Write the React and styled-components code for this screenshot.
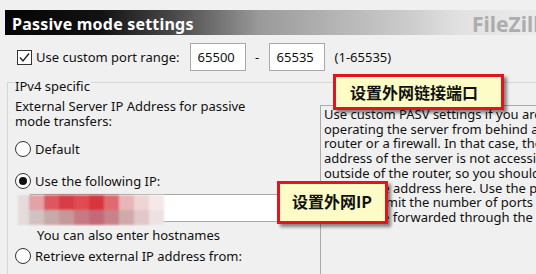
import React from 'react';
import styled, { createGlobalStyle } from 'styled-components';

const GlobalStyle = createGlobalStyle`
  html, body {
    margin: 0;
    padding: 0;
    background: #f0f0f0;
  }
  body {
    font-family: "Noto Sans", "Liberation Sans", sans-serif;
    font-size: 13px;
    color: #111;
  }
`;

const Page = styled.div`
  position: relative;
  width: 536px;
  height: 274px;
  overflow: hidden;
  background: #f0f0f0;
  padding-top: 10px;
  box-sizing: border-box;
`;

const Header = styled.div`
  margin-left: 5px;
  height: 25px;
  display: grid;
  grid-template-columns: 460px auto;
  align-items: center;
  padding-left: 7px;
  overflow: hidden;
  white-space: nowrap;
  background: linear-gradient(
    90deg,
    #050505 0%,
    #121212 18%,
    #4a4a4a 32%,
    #9a9a9a 48%,
    #b4b4b4 62%,
    #cccccc 76%,
    #e2e2e2 86%,
    #ebebeb 100%
  );
`;

const Title = styled.span`
  color: #fff;
  font-weight: 700;
  font-size: 16px;
  letter-spacing: 0.2px;
`;

const Brand = styled.span`
  color: #adadad;
  font-weight: 700;
  font-size: 21px;
`;

const PortRow = styled.div`
  display: flex;
  align-items: center;
  height: 28px;
  margin-top: 8px;
  padding-left: 17px;
`;

const CheckBox = styled.span`
  width: 15px;
  height: 15px;
  box-sizing: border-box;
  border: 1px solid #333;
  background: #fff;
  display: flex;
  align-items: center;
  justify-content: center;
  margin-right: 4px;
`;

const Field = styled.div`
  width: ${p => p.$w}px;
  height: 28px;
  box-sizing: border-box;
  border: 1px solid #a9a9a9;
  background: #fff;
  display: flex;
  align-items: center;
  padding-left: 7px;
  margin-left: ${p => p.$ml || 0}px;
`;

const Dash = styled.span`
  width: 23px;
  text-align: center;
`;

const Hint = styled.span`
  margin-left: 10px;
`;

const Group = styled.div`
  position: relative;
  margin: 11px 0 0 7px;
  width: 620px;
  height: 200px;
  border-top: 1px solid #d6d6d6;
  border-left: 1px solid #d6d6d6;
`;

const Legend = styled.span`
  position: absolute;
  top: -4px;
  left: 6px;
  padding: 0 1px;
  line-height: 15px;
  background: #f0f0f0;
`;

const Columns = styled.div`
  display: flex;
  align-items: flex-start;
`;

const Left = styled.div`
  width: 312px;
  box-sizing: border-box;
  padding: 16px 0 0 7px;
  line-height: 15px;
`;

const RadioRow = styled.div`
  display: flex;
  align-items: center;
  height: 20px;
  margin-top: ${p => p.$mt}px;
`;

const Radio = styled.span`
  width: 16px;
  height: 16px;
  box-sizing: border-box;
  border-radius: 50%;
  border: 1px solid #333;
  background: #fff;
  display: flex;
  align-items: center;
  justify-content: center;
  margin-right: 4px;

  &::after {
    content: '';
    width: 8px;
    height: 8px;
    border-radius: 50%;
    background: ${p => (p.$on ? '#111' : 'transparent')};
  }
`;

const IpField = styled.div`
  position: relative;
  margin: 3px 0 0 15px;
  width: 280px;
  height: 28px;
  box-sizing: border-box;
  border: 1px solid #a9a9a9;
  background: #fff;
`;

const Mosaic = styled.svg`
  position: absolute;
  left: -15px;
  top: -2px;
`;

const Note = styled.div`
  margin-top: 6px;
  padding-left: 22px;
`;

const Description = styled.div`
  margin-top: 22px;
  width: 240px;
  height: 200px;
  box-sizing: border-box;
  border: 1px solid #aaaaaa;
  padding: 1px 3px;
  line-height: 14.7px;
  white-space: nowrap;
  overflow: hidden;
`;

const Callout = styled.div`
  position: absolute;
  top: ${p => p.$top}px;
  left: ${p => p.$left}px;
  width: ${p => p.$w}px;
  height: ${p => p.$h}px;
  box-sizing: border-box;
  display: flex;
  align-items: center;
  padding: 0 0 ${p => p.$pb || 0}px ${p => p.$pl}px;
  background: #fdfcc6;
  border: 3px solid #e5141c;
  box-shadow: 3px 3px 3px rgba(0, 0, 0, 0.45);
  font-family: "Noto Sans CJK SC", "Noto Sans", sans-serif;
  font-weight: 700;
  font-size: 16px;
  color: #111;
`;

const mosaicRows = [
  ['#e6dada', '#e2a2a6', '#df565e', '#d83e46', '#e04c52', '#d8363e', '#e06a70', '#e8b6b8', '#f0d4d4', '#f5e8e8'],
  ['#e4dcdc', '#d2c2c2', '#c8aaaa', '#c89898', '#c87a82', '#c26a78', '#c8828a', '#d0aaaa', '#e0c8c8', '#ede2e2'],
];

const lines = [
  'Use custom PASV settings if you are',
  'operating the server from behind a',
  'router or a firewall. In that case, the IP',
  'address of the server is not accessible from',
  'outside of the router, so you should',
  'specify the address here. Use the port',
  'range to limit the number of ports that',
  'need to be forwarded through the router.',
];

function App() {
  return (
    <>
      <GlobalStyle />
      <Page>
        <Header>
          <Title>Passive mode settings</Title>
          <Brand>FileZilla</Brand>
        </Header>

        <PortRow>
          <CheckBox>
            <svg width="13" height="13" viewBox="0 0 13 13">
              <path d="M2 6.5 L5 10 L11 2.5" fill="none" stroke="#222" strokeWidth="1.4" />
            </svg>
          </CheckBox>
          <span>Use custom port range:</span>
          <Field $w={56} $ml={10}>65500</Field>
          <Dash>-</Dash>
          <Field $w={56}>65535</Field>
          <Hint>(1-65535)</Hint>
        </PortRow>

        <Group>
          <Legend>IPv4 specific</Legend>
          <Columns>
            <Left>
              <div>External Server IP Address for passive</div>
              <div>mode transfers:</div>
              <RadioRow $mt={10}>
                <Radio />
                Default
              </RadioRow>
              <RadioRow $mt={12}>
                <Radio $on />
                Use the following IP:
              </RadioRow>
              <IpField>
                <Mosaic width="150" height="33" viewBox="0 0 150 33">
                  <defs>
                    <filter id="soft" x="-10%" y="-20%" width="120%" height="140%">
                      <feGaussianBlur stdDeviation="1.2" />
                    </filter>
                  </defs>
                  <g filter="url(#soft)">
                    {mosaicRows.map((row, r) =>
                      row.map((c, i) => (
                        <rect
                          key={`${r}-${i}`}
                          x={i === 0 ? 2 : 13 + (i - 1) * 15}
                          y={2 + r * 15}
                          width={i === 0 ? 11 : 15}
                          height={15}
                          fill={c}
                        />
                      ))
                    )}
                  </g>
                </Mosaic>
              </IpField>
              <Note>You can also enter hostnames</Note>
              <RadioRow $mt={3}>
                <Radio />
                Retrieve external IP address from:
              </RadioRow>
            </Left>
            <Description>
              {lines.map(l => (
                <div key={l}>{l}</div>
              ))}
            </Description>
          </Columns>
        </Group>

        <Callout $top={74} $left={333} $w={171} $h={36} $pl={14}>
          设置外网链接端口
        </Callout>
        <Callout $top={181} $left={277} $w={111} $h={43} $pl={12} $pb={4}>
          设置外网IP
        </Callout>
      </Page>
    </>
  );
}

export default App;
